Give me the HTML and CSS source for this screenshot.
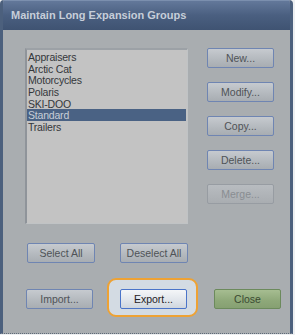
FILE: index.html
```html
<!doctype html>
<html>
<head>
<meta charset="utf-8">
<title>Maintain Long Expansion Groups</title>
<link rel="stylesheet" href="styles.css">
</head>
<body>
<div class="window">
	<div class="titlebar">Maintain Long Expansion Groups</div>
	<div class="content">
		<div class="main">
			<ul class="list">
				<li>Appraisers</li>
				<li>Arctic Cat</li>
				<li>Motorcycles</li>
				<li>Polaris</li>
				<li>SKI-DOO</li>
				<li class="sel">Standard</li>
				<li>Trailers</li>
			</ul>
			<div class="side">
				<button class="btn">New...</button>
				<button class="btn">Modify...</button>
				<button class="btn">Copy...</button>
				<button class="btn">Delete...</button>
				<button class="btn off">Merge...</button>
			</div>
		</div>
		<div class="row sel-row">
			<button class="btn wide">Select All</button>
			<button class="btn wide">Deselect All</button>
		</div>
		<div class="row foot">
			<button class="btn">Import...</button>
			<div class="ring"><button class="btn focus">Export...</button></div>
			<button class="btn close">Close</button>
		</div>
	</div>
</div>
</body>
</html>
```
FILE: styles.css
```css
*{margin:0;padding:0;box-sizing:border-box;}
ul{list-style:none;}
body{background:#eef0f2;font-family:"Liberation Sans",Arial,sans-serif;font-size:11px;}
.window{width:293px;height:334px;display:flex;flex-direction:column;
background:#a9adb0;border:3px solid #4c607d;border-top:0;border-bottom:1px dotted #5e6a78;
border-radius:4px 4px 0 0;overflow:hidden;}
.titlebar{height:30px;margin:0 -3px;padding:0 11px;line-height:28px;
background:linear-gradient(#63789a,#4a5f80 50%,#3f5372);
color:#c6ced9;font-weight:bold;font-size:11px;border-top:1px solid #7b8fae;}
.content{flex:1;padding:18px 0 0 22px;}
.main{display:flex;gap:19px;}
.list{width:163px;height:176px;background:#c3c3c3;
border-left:2px solid #8f949a;border-top:2px solid #9ca1a6;border-right:1px solid #c0c3c5;border-bottom:1px solid #c0c3c5;
padding:1px 0;}
.list li{height:11.7px;line-height:12px;padding-left:1px;margin-right:1px;color:#34373b;
font-size:10.5px;letter-spacing:-0.2px;}
.list .sel{background:#4a6284;color:#c7ced8;}
.side{display:flex;flex-direction:column;gap:14px;}
.btn{width:67px;height:20px;font:10.5px "Liberation Sans",Arial,sans-serif;color:#4f5357;
background:linear-gradient(#c6cacf,#b3b8bd 60%,#a8adb2);
border:1px solid #6f85b2;border-radius:2px;}
.btn.off{color:#898d92;border-color:#979ca2;background:linear-gradient(#b8bcc0,#a9adb1);}
.row{display:flex;}
.sel-row{margin-top:19px;padding-left:2px;gap:25px;}
.btn.wide{width:68px;}
.foot{margin-top:26px;padding-left:1px;gap:27px;align-items:center;}
.ring{margin:-11px -11px -8px -13px;padding:9px 9px 6px 11px;
border:2px solid #eea234;border-radius:9px;background:#d3dbe3;display:flex;}
.btn.focus{color:#1f2226;border-color:#4a74c9;background:linear-gradient(#f4f6f8,#dfe4ea 60%,#cfd6de);}
.btn.close{color:#3a4a32;border-color:#6c8a5c;background:linear-gradient(#a6bd91,#8ea879 60%,#86a072);}
```
